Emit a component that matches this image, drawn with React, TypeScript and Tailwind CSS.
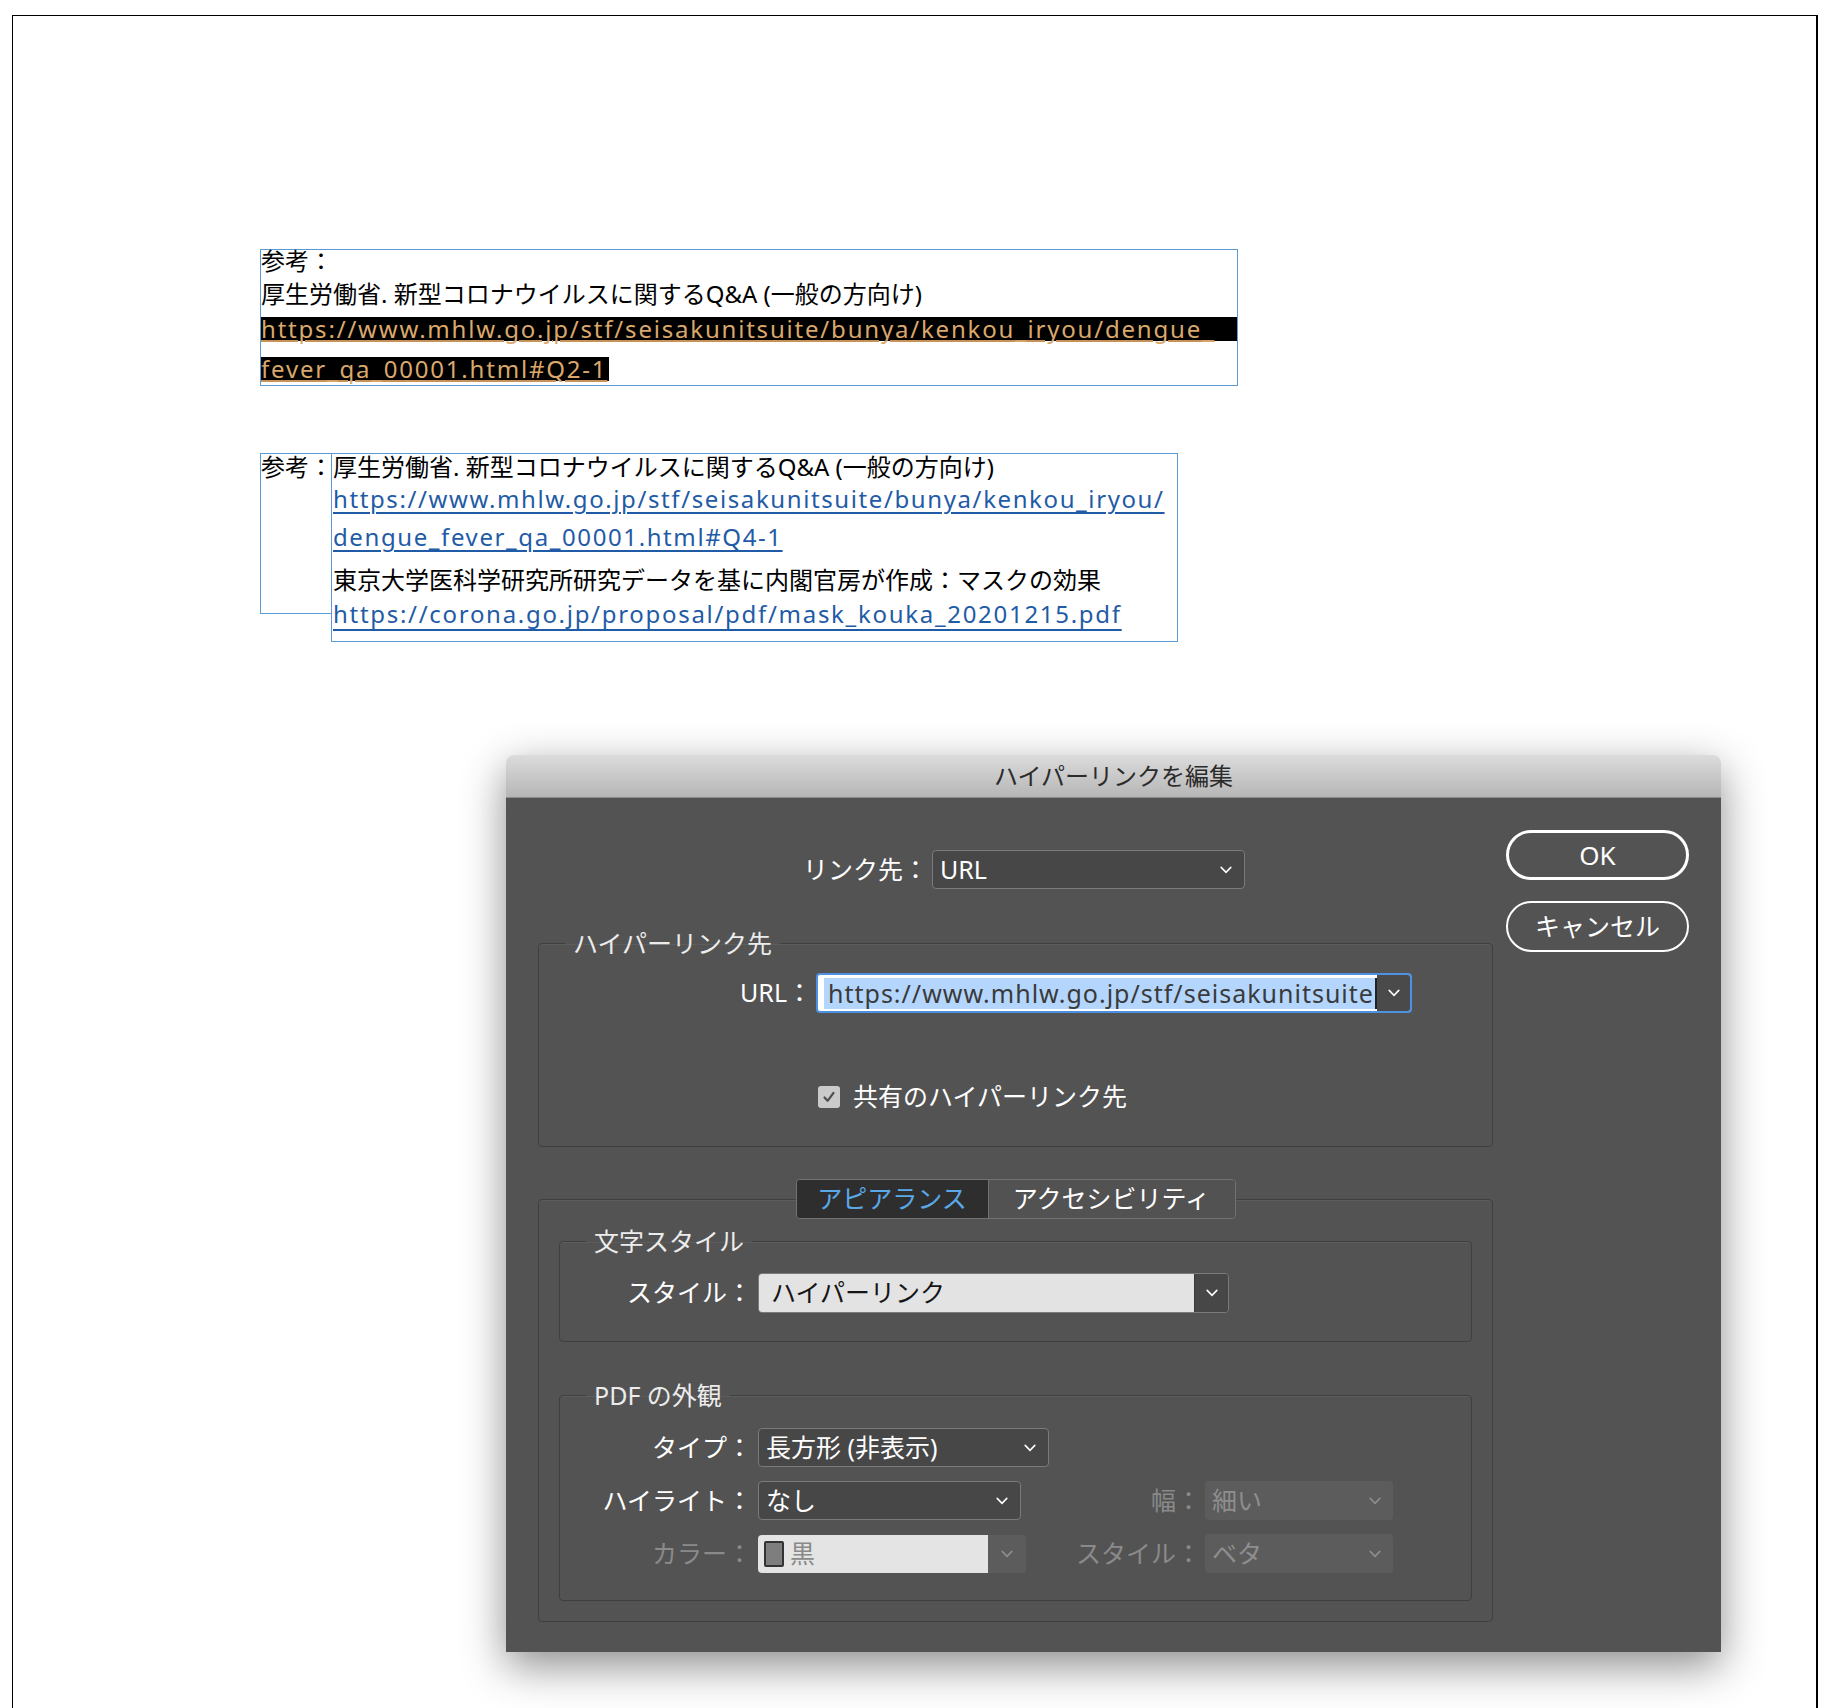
import type { ReactNode } from 'react'

function Chevron({ className = '' }: { className?: string }) {
  return (
    <svg width="12" height="8" viewBox="0 0 12 8" className={className}>
      <path d="M1.2 1.4 L6 6.4 L10.8 1.4" fill="none" stroke="currentColor" strokeWidth="1.6" strokeLinecap="round" />
    </svg>
  )
}

function Select({ width, children, disabled = false }: { width: string; children: ReactNode; disabled?: boolean }) {
  return (
    <div
      className={`${width} flex h-[39px] items-center justify-between rounded-[4px] pl-[7px] pr-[12px] ${
        disabled ? 'bg-[#5c5c5c] text-[#8e8e8e]' : 'border border-[#7a7a7a] bg-[#474747] text-white'
      }`}
    >
      <span>{children}</span>
      <Chevron />
    </div>
  )
}

function Group({ legend, className = '', children }: { legend: ReactNode; className?: string; children: ReactNode }) {
  return (
    <fieldset className={`rounded-[4px] border border-[#3f3f3f] shadow-[inset_0_1px_0_rgba(255,255,255,0.06)] ${className}`}>
      <legend className="ml-[26px] px-[8px] text-[25px] leading-[28px] text-[#ececec]">{legend}</legend>
      {children}
    </fieldset>
  )
}

export default function App() {
  return (
    <div className="h-[1708px] w-[1840px] overflow-hidden bg-white pl-[12px] pt-[15px] font-['Noto_Sans','Noto_Sans_CJK_JP',sans-serif]">
      <div className="h-[1700px] w-[1806px] border-l border-r-2 border-t border-black pl-[247px] pt-[233px]">
        {/* text frame 1 */}
        <div className="h-[137px] w-[978px] border border-[#5b9bd5] text-[24px] text-black">
          <div className="h-[24px] whitespace-nowrap leading-[22px]">参考：</div>
          <div className="h-[40px] leading-[40px]">厚生労働省. 新型コロナウイルスに関するQ&amp;A (一般の方向け)</div>
          <div className="mt-[3px] block h-[24px] whitespace-nowrap bg-black leading-[24px] tracking-[1.8px] text-[#dba86c] underline decoration-[#c79257] underline-offset-[2px]">
            https://www.mhlw.go.jp/stf/seisakunitsuite/bunya/kenkou_iryou/dengue_
          </div>
          <div className="mt-[16px] inline-block h-[24px] bg-black pr-[2px] leading-[24px] tracking-[1.8px] text-[#dba86c] underline decoration-[#c79257] underline-offset-[2px]">
            fever_qa_00001.html#Q2-1
          </div>
        </div>

        {/* text frame 2 */}
        <div className="mt-[67px] flex items-start text-[24px] text-black">
          <div className="h-[161px] w-[72px] border border-[#5b9bd5]">
            <div className="h-[26px] whitespace-nowrap leading-[26px]">参考：</div>
          </div>
          <div className="-ml-px h-[189px] w-[847px] border border-[#5b9bd5] pl-px">
            <div className="h-[26px] leading-[26px]">厚生労働省. 新型コロナウイルスに関するQ&amp;A (一般の方向け)</div>
            <div className="h-[38px] whitespace-nowrap leading-[38px] tracking-[1.6px] text-[#1f5ba6] underline decoration-[1.5px] underline-offset-[4px]">
              https://www.mhlw.go.jp/stf/seisakunitsuite/bunya/kenkou_iryou/
            </div>
            <div className="h-[38px] whitespace-nowrap leading-[38px] tracking-[1.6px] text-[#1f5ba6] underline decoration-[1.5px] underline-offset-[4px]">
              dengue_fever_qa_00001.html#Q4-1
            </div>
            <div className="h-[48px] leading-[48px]">東京大学医科学研究所研究データを基に内閣官房が作成：マスクの効果</div>
            <div className="h-[20px] whitespace-nowrap leading-[20px] tracking-[1.7px] text-[#1f5ba6] underline decoration-[1.5px] underline-offset-[6px]">
              https://corona.go.jp/proposal/pdf/mask_kouka_20201215.pdf
            </div>
          </div>
        </div>

        {/* dialog */}
        <div className="ml-[246px] mt-[113px] w-[1215px] rounded-t-[8px] shadow-[0_14px_44px_rgba(0,0,0,0.45)]">
          <div className="flex h-[43px] items-center justify-center rounded-t-[8px] border-b border-[#8c8c8c] bg-gradient-to-b from-[#dcdcdc] to-[#b6b6b6] text-[24px] text-[#2b2b2b]">
            ハイパーリンクを編集
          </div>
          <div className="flex h-[854px] bg-[#535353] pl-[32px] text-[25px] text-white">
            <div className="w-[955px]">
              <div className="flex items-center pt-[52px]">
                <div className="w-[394px] pr-[4px] text-right">リンク先：</div>
                <Select width="w-[313px]">URL</Select>
              </div>

              <Group legend="ハイパーリンク先" className="mt-[40px] h-[218px]">
                <div className="mt-[16px] flex items-center">
                  <div className="w-[277px] pr-[4px] text-right">URL：</div>
                  <div className="flex h-[40px] w-[596px] rounded-[4px] border-2 border-[#4d91e2] bg-white">
                    <div className="flex flex-1 items-center pl-[6px]">
                      <span className="h-[31px] whitespace-nowrap bg-[#b4d5fc] pl-[4px] pr-[1px] leading-[31px] tracking-[1px] text-[#3a3a3a]">
                        https://www.mhlw.go.jp/stf/seisakunitsuite
                      </span>
                      <span className="h-[31px] w-[2px] bg-[#222]" />
                    </div>
                    <div className="flex w-[33px] items-center justify-center rounded-r-[2px] bg-[#4a4a4a]">
                      <Chevron />
                    </div>
                  </div>
                </div>
                <div className="ml-[279px] mt-[65px] flex items-center">
                  <div className="flex h-[22px] w-[22px] items-center justify-center rounded-[3px] bg-[#cacaca]">
                    <svg width="14" height="14" viewBox="0 0 14 14">
                      <path d="M2.5 7.5 L5.6 10.8 L11.5 2.8" fill="none" stroke="#4e4e4e" strokeWidth="2.2" strokeLinecap="round" strokeLinejoin="round" />
                    </svg>
                  </div>
                  <span className="ml-[13px]">共有のハイパーリンク先</span>
                </div>
              </Group>

              <fieldset className="mt-[32px] h-[443px] rounded-[4px] border border-[#3f3f3f] px-[20px] shadow-[inset_0_1px_0_rgba(255,255,255,0.06)]">
                <legend className="mx-auto flex h-[40px] overflow-hidden rounded-[4px] border border-[#727272]">
                  <div className="flex w-[191px] items-center justify-center bg-[#2e2e2e] text-[#5aa8e8]">アピアランス</div>
                  <div className="flex w-[247px] items-center justify-center border-l border-[#727272] bg-[#525252]">
                    アクセシビリティ
                  </div>
                </legend>

                <Group legend="文字スタイル" className="mt-[8px] h-[115px]">
                  <div className="mt-[18px] flex items-center">
                    <div className="w-[198px] pr-[6px] text-right">スタイル：</div>
                    <div className="flex h-[40px] w-[471px] overflow-hidden rounded-[4px] border border-[#7a7a7a]">
                      <div className="flex flex-1 items-center bg-[#e3e3e3] pl-[12px] text-[#151515]">ハイパーリンク</div>
                      <div className="flex w-[34px] items-center justify-center border-l border-[#3a3a3a] bg-[#474747]">
                        <Chevron />
                      </div>
                    </div>
                  </div>
                </Group>

                <Group legend="PDF の外観" className="mt-[39px] h-[220px]">
                  <div className="mt-[19px] flex items-center">
                    <div className="w-[198px] pr-[6px] text-right">タイプ：</div>
                    <Select width="w-[291px]">長方形 (非表示)</Select>
                  </div>
                  <div className="mt-[14px] flex items-center">
                    <div className="w-[198px] pr-[6px] text-right">ハイライト：</div>
                    <div className="w-[270px]">
                      <Select width="w-[263px]">なし</Select>
                    </div>
                    <div className="w-[177px] pr-[4px] text-right text-[#8a8a8a]">幅：</div>
                    <Select width="w-[188px]" disabled>
                      細い
                    </Select>
                  </div>
                  <div className="mt-[14px] flex items-center">
                    <div className="w-[198px] pr-[6px] text-right text-[#8a8a8a]">カラー：</div>
                    <div className="w-[270px]">
                      <div className="flex h-[38px] w-[268px] overflow-hidden rounded-[4px]">
                        <div className="flex w-[230px] items-center bg-[#e4e4e4] pl-[6px] text-[#8a8a8a]">
                          <span className="mr-[6px] h-[26px] w-[20px] rounded-[2px] border-2 border-[#333] bg-[#7e7e7e]" />
                          黒
                        </div>
                        <div className="flex flex-1 items-center justify-center bg-[#5c5c5c] text-[#8e8e8e]">
                          <Chevron />
                        </div>
                      </div>
                    </div>
                    <div className="w-[177px] pr-[4px] text-right text-[#8a8a8a]">スタイル：</div>
                    <Select width="w-[188px]" disabled>
                      ベタ
                    </Select>
                  </div>
                </Group>
              </fieldset>
            </div>

            <div className="ml-[13px] w-[183px] pt-[32px]">
              <div className="flex h-[50px] items-center justify-center rounded-full border-[3px] border-white text-[26px]">OK</div>
              <div className="mt-[21px] flex h-[51px] items-center justify-center rounded-full border-2 border-white text-[25px]">
                キャンセル
              </div>
            </div>
          </div>
        </div>
      </div>
    </div>
  )
}
